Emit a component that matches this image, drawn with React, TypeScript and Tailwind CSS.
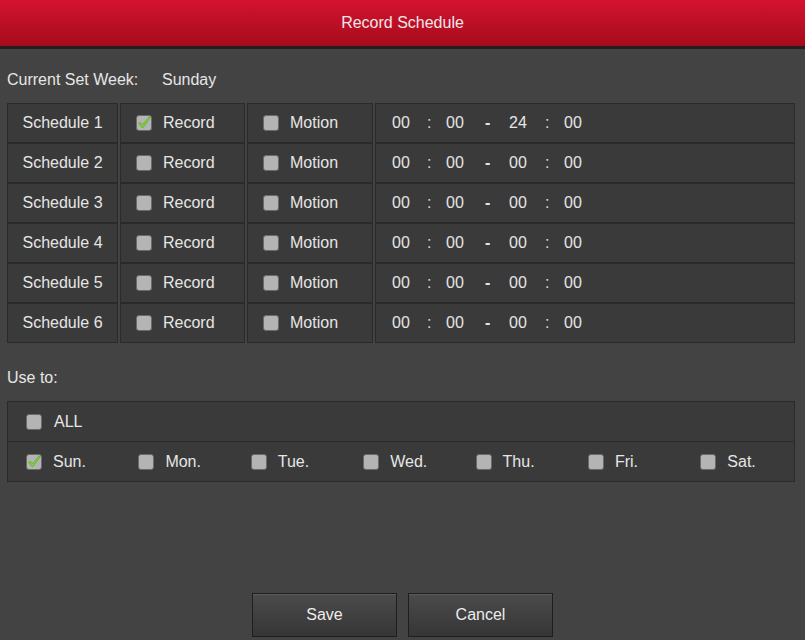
import React from "react";

const font = { fontFamily: '"Liberation Sans", Arial, sans-serif' };

function Check({ checked }: { checked?: boolean }) {
  return (
    <svg width="18" height="18" viewBox="0 0 18 18" className="shrink-0">
      <rect x="1.5" y="1.5" width="15" height="15" rx="2.5" fill="#b4b4b4" stroke="#6a6a6a" strokeWidth="1" />
      {checked && (
        <path d="M3.5 9.5 L7.5 14 L15.5 3.5 L14 3 L7.3 11 L5 8 Z" fill="#7ed23c" stroke="#5fb024" strokeWidth="0.8" strokeLinejoin="round" />
      )}
    </svg>
  );
}

const cell = "h-[40px] border border-[#2a2a2a] bg-[#3a3a3a] flex items-center";

const schedules = [
  { rec: true, end: "24" },
  { rec: false, end: "00" },
  { rec: false, end: "00" },
  { rec: false, end: "00" },
  { rec: false, end: "00" },
  { rec: false, end: "00" },
];

const days = ["Sun.", "Mon.", "Tue.", "Wed.", "Thu.", "Fri.", "Sat."];

export default function App() {
  return (
    <div className="w-[805px] h-[640px] overflow-hidden bg-[#434343] text-[16px] text-[#e6e6e6]" style={font}>
      <header className="h-[49px] border-b-[3px] border-[#241e1f] bg-linear-to-b from-[#d4132f] to-[#a50b1c] flex items-center justify-center">
        <span className="text-[#f3e6e8]">Record Schedule</span>
      </header>

      <div className="px-[7px]">
        <div className="h-[54px] pt-[8px] flex items-center">
          <span className="w-[155px]">Current Set Week:</span>
          <span>Sunday</span>
        </div>

        <div className="flex flex-col w-[788px]">
          {schedules.map((s, i) => (
            <div key={i} className="flex gap-[2px]">
              <div className={`${cell} w-[111px] shrink-0 justify-center`}>Schedule {i + 1}</div>
              <div className={`${cell} w-[125px] shrink-0 pl-[14px] gap-[10px]`}>
                <Check checked={s.rec} />
                <span>Record</span>
              </div>
              <div className={`${cell} w-[126px] shrink-0 pl-[14px] gap-[10px]`}>
                <Check />
                <span>Motion</span>
              </div>
              <div className={`${cell} flex-1 pl-[16px]`}>
                <span className="w-[35px]">00</span>
                <span className="w-[19px] text-[#d8d8d8]">:</span>
                <span className="w-[39px]">00</span>
                <span className="w-[24px] font-bold">-</span>
                <span className="w-[36px]">{s.end}</span>
                <span className="w-[19px] text-[#d8d8d8]">:</span>
                <span>00</span>
              </div>
            </div>
          ))}
        </div>

        <div className="h-[58px] pt-[12px] flex items-center">Use to:</div>

        <div className="w-[788px] border border-[#2a2a2a] bg-[#3a3a3a]">
          <div className="h-[40px] flex items-center pl-[17px] gap-[11px] border-b border-[#2a2a2a]">
            <Check />
            <span>ALL</span>
          </div>
          <div className="h-[39px] flex items-center pl-[17px] overflow-hidden">
            {days.map((d, i) => (
              <div key={d} className="w-[112.4px] shrink-0 flex items-center gap-[10px]">
                <Check checked={i === 0} />
                <span>{d}</span>
              </div>
            ))}
          </div>
        </div>

        <div className="mt-[111px] flex justify-center gap-[11px]">
          {["Save", "Cancel"].map((b) => (
            <button
              key={b}
              className="w-[145px] h-[44px] border border-[#1e1e1e] bg-linear-to-b from-[#4b4b4b] to-[#363636] text-[#ececec] shadow-[inset_0_1px_0_#5a5a5a]"
              style={font}
            >
              {b}
            </button>
          ))}
        </div>
      </div>
    </div>
  );
}
